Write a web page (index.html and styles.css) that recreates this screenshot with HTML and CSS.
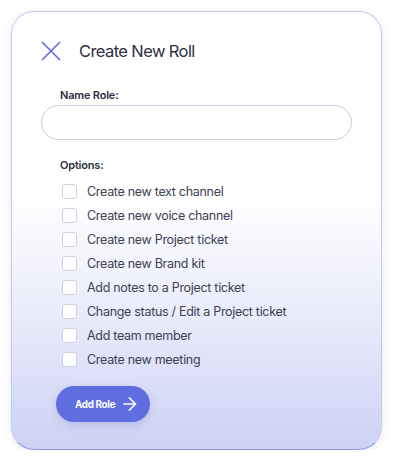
FILE: index.html
```html
<!DOCTYPE html>
<html>
	<head>
		<meta charset="utf-8" />
		<title>Create New Roll</title>
		<link rel="stylesheet" href="styles.css">
	</head>
	<body>
		<div class="card">
			<div class="head">
				<svg class="close" width="20" height="20" viewBox="0 0 20 20">
					<path d="M1 1L19 19M19 1L1 19" stroke="#5b67e0" stroke-width="1.6" fill="none" />
				</svg>
				<h1 class="title">Create New Roll</h1>
			</div>
			<label class="label">Name Role:</label>
			<input class="field" type="text" />
			<div class="label options-label">Options:</div>
			<ul class="options">
				<li><span class="box"></span>Create new text channel</li>
				<li><span class="box"></span>Create new voice channel</li>
				<li><span class="box"></span>Create new Project ticket</li>
				<li><span class="box"></span>Create new Brand kit</li>
				<li><span class="box"></span>Add notes to a Project ticket</li>
				<li><span class="box"></span>Change status / Edit a Project ticket</li>
				<li><span class="box"></span>Add team member</li>
				<li><span class="box"></span>Create new meeting</li>
			</ul>
			<button class="add">Add Role
				<svg width="14" height="14" viewBox="0 0 14 14">
					<path d="M1 7H12.5M6.5 1L12.5 7L6.5 13" stroke="#fff" stroke-width="1.7" fill="none" stroke-linecap="round" stroke-linejoin="round" />
				</svg>
			</button>
		</div>
	</body>
</html>
```
FILE: styles.css
```css
body{margin:0;background:#fff;font-family:Inter, "Liberation Sans", sans-serif;}
ul,li{margin:0;padding:0;list-style:none;}

.card{
	box-sizing:border-box;
	width:371px;
	height:439px;
	margin:11px 0 0 11px;
	padding:0 29px 0 29px;
	border:1.5px solid #c3c9f6;
	border-bottom-color:#8d97ea;
	border-radius:23px;
	background:linear-gradient(180deg, #ffffff 0%, #ffffff 42%, #e9ebfa 70%, #cdd2f4 100%);
	box-shadow:0 2px 10px rgba(40,40,60,0.10);
}
.head{
	display:flex;
	align-items:center;
	height:20px;
	margin-top:29px;
}
.close{flex:none;}
.title{
	margin:0 0 0 18px;
	font-size:16.5px;
	font-weight:400;
	letter-spacing:-0.6px;
	color:#2c3040;
}
.label{
	display:block;
	margin:27px 0 0 19px;
	font-size:11px;
	font-weight:600;
	letter-spacing:-0.2px;
	color:#2c3040;
}
.field{
	display:block;
	box-sizing:border-box;
	width:311px;
	height:35px;
	margin-top:3px;
	border:1.5px solid #c7cbdd;
	border-radius:18px;
	background:#fff;
	outline:none;
}
.options-label{margin-top:18px;}
.options{margin:7px 0 0 21px;}
.options li{
	display:flex;
	align-items:center;
	height:24px;
	font-size:12.5px;
	letter-spacing:-0.3px;
	color:#3d4153;
}
.box{
	box-sizing:border-box;
	width:15px;
	height:15px;
	margin-right:10px;
	border:1.5px solid #cdd1e2;
	border-radius:3px;
	background:#fff;
}
.add{
	display:flex;
	align-items:center;
	gap:8px;
	height:36px;
	margin:15px 0 0 15px;
	padding:0 13px 0 19px;
	border:none;
	border-radius:18px;
	background:#5f6de0;
	color:#fff;
	font-family:Inter, "Liberation Sans", sans-serif;
	font-size:9.8px;
	font-weight:700;
	letter-spacing:-0.3px;
	box-shadow:0 3px 8px rgba(60,70,160,0.18);
}
```
